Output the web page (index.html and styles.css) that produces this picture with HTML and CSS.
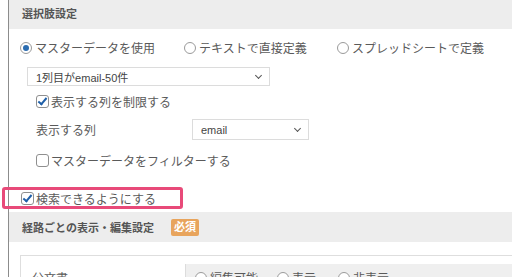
FILE: index.html
```html
<!DOCTYPE html>
<html lang="ja">
<head>
  <meta charset="UTF-8">
  <title>選択肢設定</title>
  <link rel="stylesheet" href="styles.css">
</head>
<body>

<div class="setting-panel">
  <div class="setting-head first-head">選択肢設定</div>

  <div class="setting-body">
    <div class="choice-row">
      <label class="choice-radio"><span class="radio checked"></span>マスターデータを使用</label>
      <label class="choice-radio"><span class="radio"></span>テキストで直接定義</label>
      <label class="choice-radio"><span class="radio"></span>スプレッドシートで定義</label>
    </div>

    <div class="master-select select-box">
      <span>1列目がemail-50件</span>
      <span class="chevron"></span>
    </div>

    <div class="sub-options">
      <label class="check-row"><span class="checkbox checked"></span>表示する列を制限する</label>

      <div class="column-row">
        <span class="column-label">表示する列</span>
        <div class="column-select select-box">
          <span>email</span>
          <span class="chevron"></span>
        </div>
      </div>

      <label class="check-row filter-row"><span class="checkbox"></span>マスターデータをフィルターする</label>
    </div>

    <label class="check-row search-row"><span class="checkbox checked"></span>検索できるようにする</label>
  </div>

  <div class="setting-head">
    経路ごとの表示・編集設定
    <span class="required-badge">必須</span>
  </div>

  <div class="route-box">
    <div class="route-row">
      <span class="route-name">公文書</span>
      <div class="route-choices">
        <label class="choice-radio"><span class="radio"></span>編集可能</label>
        <label class="choice-radio"><span class="radio"></span>表示</label>
        <label class="choice-radio"><span class="radio"></span>非表示</label>
      </div>
    </div>
  </div>
</div>

</body>
</html>
```

FILE: styles.css
```css
body {
  margin: 0;
  font-family: 'Liberation Sans', 'Noto Sans CJK JP', sans-serif;
  color: #5a5a5a;
  background: #fff;
  overflow: hidden;
}

.setting-panel {
  margin-left: 8px;
  height: 277px;
  border-left: 1px solid #8c8c8c;
}

.setting-head {
  display: flex;
  align-items: center;
  height: 30px;
  padding-left: 13px;
  background: #ededed;
  font-size: 11px;
  font-weight: bold;
  color: #555;
}

.first-head {
  height: 29px;
  padding-bottom: 3px;
  box-sizing: border-box;
}

.setting-body {
  padding: 10px 0 7px 11px;
}

.choice-row {
  display: flex;
  height: 17px;
  align-items: center;
}

.choice-radio {
  display: inline-flex;
  align-items: center;
  font-size: 12px;
  color: #5a5a5a;
}

.choice-row .choice-radio:nth-child(1) { width: 164px; }
.choice-row .choice-radio:nth-child(2) { width: 153px; }

.radio {
  width: 12px;
  height: 12px;
  border: 1px solid #9a9a9a;
  border-radius: 50%;
  margin-right: 3px;
  box-sizing: border-box;
  position: relative;
  background: #fff;
}

.radio.checked::after {
  content: '';
  position: absolute;
  left: 2px;
  top: 2px;
  width: 6px;
  height: 6px;
  border-radius: 50%;
  background: #2b6cb0;
}

.select-box {
  display: flex;
  align-items: center;
  justify-content: space-between;
  box-sizing: border-box;
  border: 1px solid #dcdcdc;
  background: #fff;
  font-size: 11px;
  color: #444;
  padding: 0 8px;
}

.master-select {
  margin: 11px 0 0 7px;
  width: 243px;
  height: 19px;
}

.chevron {
  width: 4px;
  height: 4px;
  border-right: 1px solid #555;
  border-bottom: 1px solid #555;
  transform: rotate(45deg);
  margin-top: -3px;
}

.sub-options {
  padding-left: 16px;
}

.check-row {
  display: flex;
  align-items: center;
  font-size: 12px;
  color: #5a5a5a;
}

.sub-options .check-row:first-child {
  margin-top: 7px;
}

.checkbox {
  width: 13px;
  height: 13px;
  border: 1px solid #8f8f8f;
  border-radius: 3px;
  box-sizing: border-box;
  margin-right: 2px;
  position: relative;
  background: #fff;
}

.checkbox.checked::after {
  content: '';
  position: absolute;
  left: 3px;
  top: 0;
  width: 3px;
  height: 7px;
  border-right: 2px solid #1f5fa8;
  border-bottom: 2px solid #1f5fa8;
  transform: rotate(40deg);
}

.column-row {
  display: flex;
  align-items: center;
  margin-top: 9px;
  height: 21px;
}

.column-label {
  font-size: 12px;
  width: 156px;
}

.column-select {
  width: 117px;
  height: 21px;
}

.filter-row {
  margin-top: 12px;
}

.search-row {
  position: relative;
  margin: 22px 0 0 1px;
  height: 14px;
}

.search-row::before {
  content: '';
  position: absolute;
  left: -19px;
  top: -4px;
  width: 175px;
  height: 16px;
  border: 3px solid #e84a79;
  border-radius: 3px;
}

.required-badge {
  margin-left: 17px;
  padding: 1px 3px;
  background: #e8a45c;
  color: #fff;
  font-size: 11px;
  font-weight: bold;
  border-radius: 2px;
  line-height: 15px;
}

.route-box {
  margin: 13px 0 0 11px;
  border: 1px solid #dedede;
  border-right: none;
  height: 40px;
}

.route-row {
  display: flex;
  margin-top: 8px;
  height: 30px;
}

.route-name {
  width: 153px;
  padding: 5px 0 0 11px;
  font-size: 12px;
}

.route-choices {
  flex: 1;
  display: flex;
  align-items: flex-start;
  padding: 5px 0 0 9px;
  background: #efefef;
  border-left: 1px solid #dcdcdc;
}

.route-choices .choice-radio:nth-child(1) { width: 82px; }
.route-choices .choice-radio:nth-child(2) { width: 61px; }
```
